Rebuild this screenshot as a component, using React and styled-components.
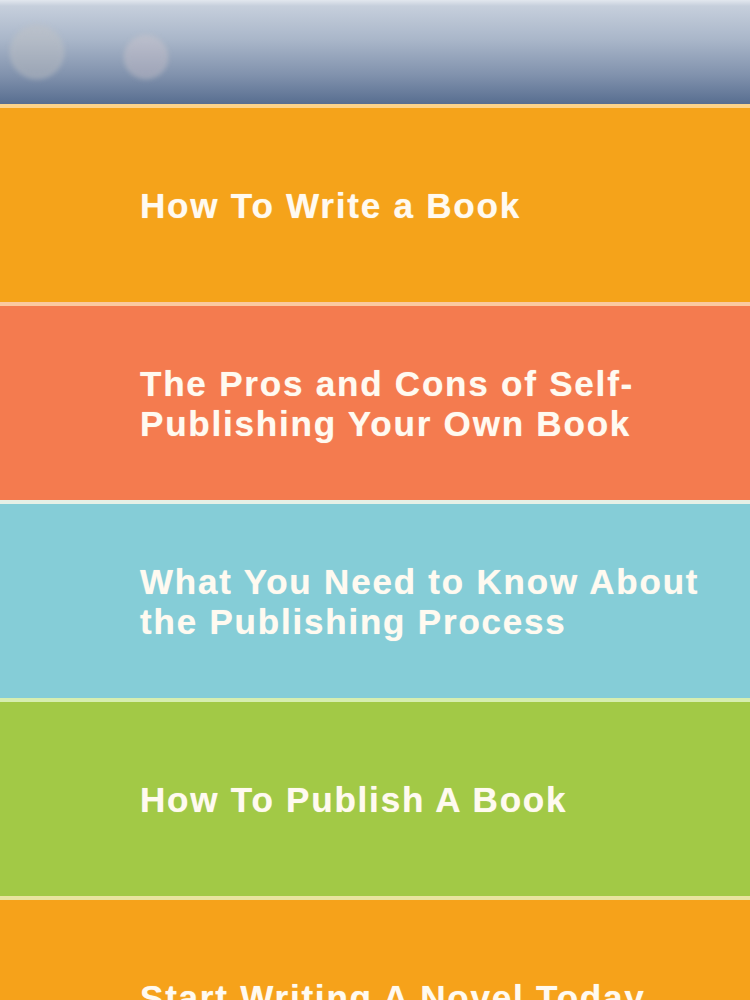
import styled, { createGlobalStyle } from "styled-components";

const GlobalStyle = createGlobalStyle`
  html, body {
    margin: 0;
    padding: 0;
    background: #f5a31a;
    overflow: hidden;
  }
  body {
    font-family: "Liberation Sans", Arial, sans-serif;
  }
`;

const items = [
  { title: "How To Write a Book", color: "#f5a31a", band: "#fcd38a" },
  { title: "The Pros and Cons of Self-\nPublishing Your Own Book", color: "#f47b4f", band: "#fbc9a0" },
  { title: "What You Need to Know About\nthe Publishing Process", color: "#85cdd7", band: "#e6f0e6" },
  { title: "How To Publish A Book", color: "#a2c946", band: "#d6eeb0" },
  { title: "Start Writing A Novel Today", color: "#f6a21a", band: "#e9e4a0" },
];

const Page = styled.div`
  width: 750px;
  height: 1000px;
  overflow: hidden;
  display: flex;
  flex-direction: column;
`;

const TopBar = styled.header`
  flex: 0 0 104px;
  display: flex;
  align-items: center;
  gap: 60px;
  padding: 0 0 0 10px;
  box-sizing: border-box;
  background: linear-gradient(
    to bottom,
    #e2e7ee 0px,
    #c6cfdc 6px,
    #a9b6c9 40px,
    #8192ad 75px,
    #586e90 104px
  );
`;

const Blob = styled.div`
  width: ${(p) => p.size}px;
  height: ${(p) => p.size}px;
  margin-top: ${(p) => p.offset}px;
  border-radius: 50%;
  background: ${(p) => p.tint};
  border: 2px solid rgba(190, 195, 200, 0.35);
  filter: blur(2.5px);
`;

const Row = styled.section`
  flex: 0 0 198px;
  box-sizing: border-box;
  display: flex;
  align-items: center;
  padding: 2px 0 0 140px;
  background: ${(p) => p.color};
  border-top: 4px solid ${(p) => p.band};
`;

const Title = styled.h2`
  margin: 0;
  color: #fffaf0;
  font-size: 35px;
  line-height: 40px;
  font-weight: 700;
  white-space: pre-line;
  letter-spacing: 1.8px;
  text-shadow: 0 0 1px rgba(255, 255, 255, 0.6);
`;

export default function App() {
  return (
    <Page>
      <GlobalStyle />
      <TopBar>
        <Blob size={50} offset={0} tint="rgba(195, 195, 195, 0.4)" />
        <Blob size={40} offset={10} tint="rgba(215, 200, 205, 0.35)" />
      </TopBar>
      {items.map((item) => (
        <Row key={item.title} color={item.color} band={item.band}>
          <Title>{item.title}</Title>
        </Row>
      ))}
    </Page>
  );
}
